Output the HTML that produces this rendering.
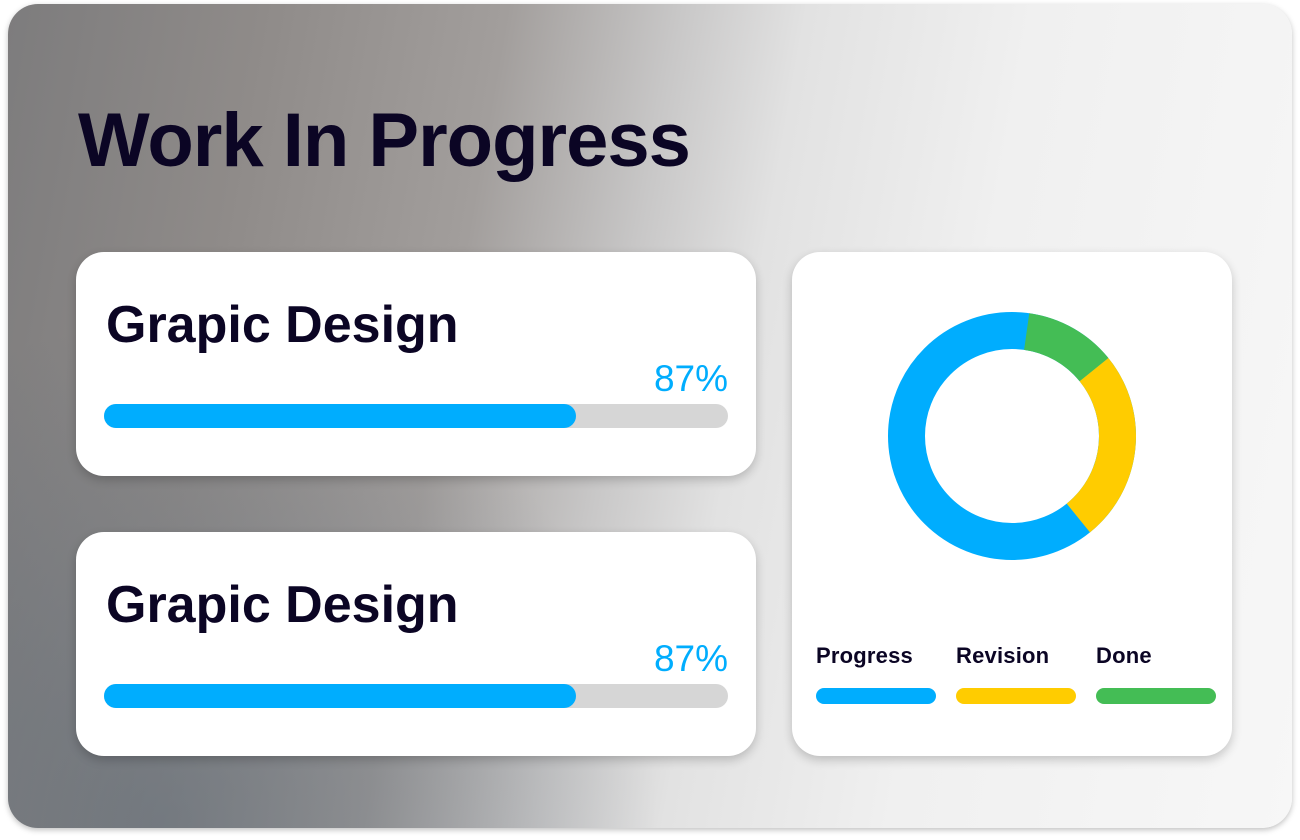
<!DOCTYPE html>
<html><head><style>
body{margin:0;width:1300px;height:840px;background:#fff;font-family:"Liberation Sans",sans-serif;overflow:hidden;position:relative}
.bg{position:absolute;left:8px;top:4px;width:1284px;height:824px;border-radius:30px;overflow:hidden;box-shadow:0 2px 6px rgba(0,0,0,.25);
background:linear-gradient(100deg,#7d7c7d 0%,#8f8b89 18%,#a29e9c 35%,#c8c7c7 47%,#e2e2e2 56%,#f0f0f0 72%,#f7f7f7 100%)}
.bg:after{content:"";position:absolute;inset:0;background:radial-gradient(ellipse 500px 500px at 150px 820px,rgba(85,100,115,.5),rgba(85,100,115,0) 100%)}
h1{position:absolute;left:78px;top:96px;margin:0;font-size:76px;font-weight:bold;color:#0b0524;letter-spacing:-1px;line-height:90px}
.card{position:absolute;background:#fff;border-radius:28px;box-shadow:0 4px 10px rgba(0,0,0,.2)}
.card h2{position:absolute;left:30px;top:43px;margin:0;font-size:52px;font-weight:bold;color:#0b0524;line-height:60px}
.pct{position:absolute;right:28px;top:105px;font-size:37px;color:#00adfe;line-height:44px}
.bar{position:absolute;left:28px;top:152px;width:624px;height:24px;border-radius:12px;background:#d6d6d6}
.bar div{width:472px;height:24px;border-radius:12px;background:#00adfe}
.lg{position:absolute;top:391px;font-size:22px;color:#0b0524;font-weight:bold;letter-spacing:.2px}
.lb{position:absolute;top:436px;width:120px;height:16px;border-radius:8px}
</style></head><body>
<div class="bg"></div>
<h1>Work In Progress</h1>
<div class="card" style="left:76px;top:252px;width:680px;height:224px"><h2>Grapic Design</h2><div class="pct">87%</div><div class="bar"><div></div></div></div>
<div class="card" style="left:76px;top:532px;width:680px;height:224px"><h2>Grapic Design</h2><div class="pct">87%</div><div class="bar"><div></div></div></div>
<div class="card" style="left:792px;top:252px;width:440px;height:504px">
<svg width="440" height="504" style="position:absolute;left:0;top:0">
<g transform="translate(220,184) rotate(-90)" fill="none" stroke-width="37">
<circle r="105.5" stroke="#00adfe"/>
<circle r="105.5" stroke="#44bd55" stroke-dasharray="79.2 1000" transform="rotate(8)"/>
<circle r="105.5" stroke="#ffcc00" stroke-dasharray="165.7 1000" transform="rotate(51)"/>
</g></svg>
<div class="lg" style="left:24px">Progress</div><div class="lg" style="left:164px">Revision</div><div class="lg" style="left:304px">Done</div>
<div class="lb" style="left:24px;background:#00adfe"></div><div class="lb" style="left:164px;background:#ffcc00"></div><div class="lb" style="left:304px;background:#44bd55"></div>
</div>
</body></html>
